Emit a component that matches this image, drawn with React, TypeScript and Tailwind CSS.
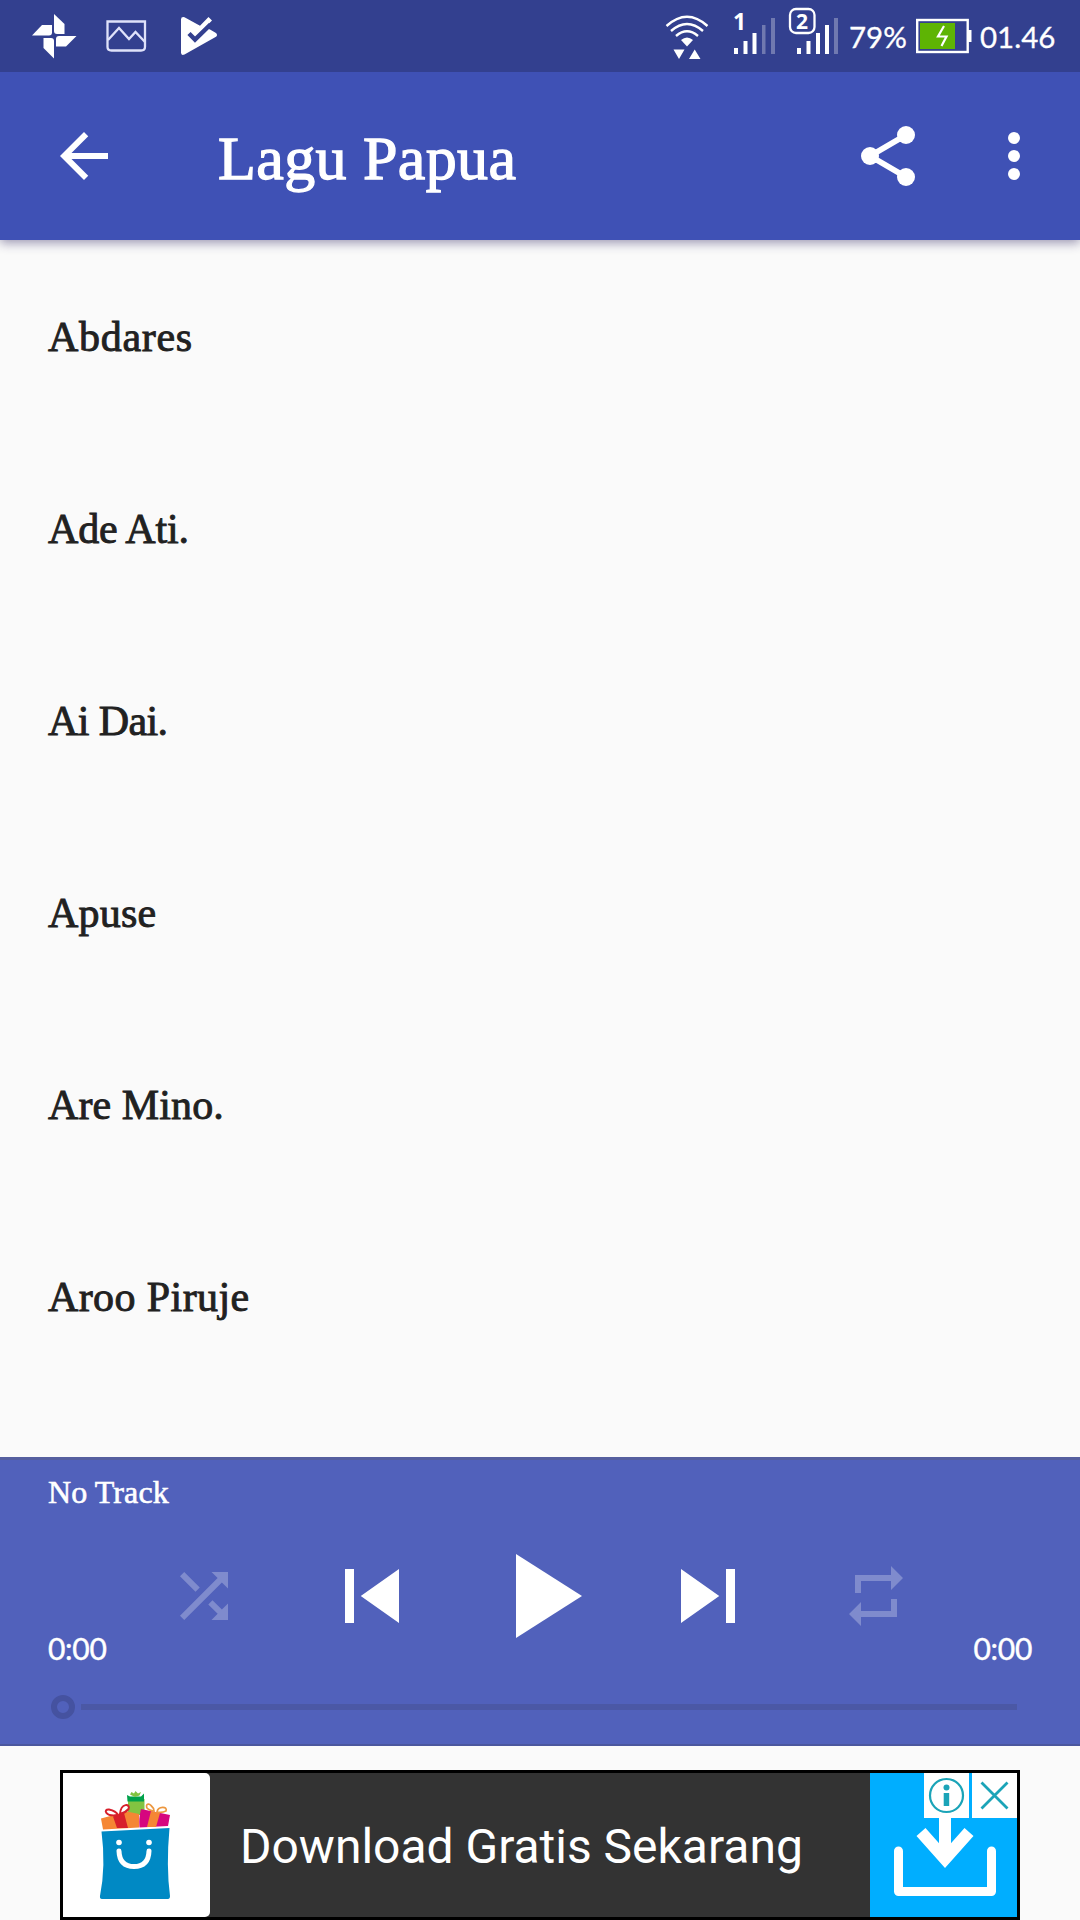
import React from "react";

const songs = [
  { title: "Abdares", spacing: "tracking-[0.7px]" },
  { title: "Ade Ati.", spacing: "tracking-[-0.2px]" },
  { title: "Ai Dai.", spacing: "tracking-[-0.6px]" },
  { title: "Apuse", spacing: "tracking-[0.2px]" },
  { title: "Are Mino.", spacing: "tracking-[0.1px]" },
  { title: "Aroo Piruje", spacing: "tracking-[0.4px]" },
];

function Icon({ d, className }: { d: string; className: string }) {
  return (
    <svg viewBox="0 0 24 24" fill="currentColor" className={"shrink-0 " + className}>
      <path d={d} />
    </svg>
  );
}

function StatusBar() {
  return (
    <div className="relative z-20 flex h-[72px] shrink-0 items-start bg-[#33408f] text-white">
      <svg className="ml-[30px] h-[72px] w-[50px] shrink-0" viewBox="30 0 50 72" fill="#fff">
        <path d="M54 14L64.500 24V34H57Q54 34 54 31Z" />
        <path d="M76.500 36L66 46.500H56V39Q56 36 59 36Z" />
        <path d="M54 58.500L43.500 48V38H51Q54 38 54 41Z" />
        <path d="M32 35.500L42 25H52V32.500Q52 35.500 49 35.500Z" />
      </svg>
      <svg className="ml-[22px] h-[72px] w-[48px] shrink-0" viewBox="102 0 48 72" fill="none" stroke="#dfe2fa" strokeWidth="2.300">
        <path d="M107.500 21.500H145V47Q145 50.500 141 50.500H111.500Q107.500 50.500 107.500 47Z" />
        <path d="M108 40L119 28L129 39L135.500 32L145 42" />
      </svg>
      <svg className="ml-[26px] h-[72px] w-[50px] shrink-0" viewBox="176 0 50 72">
        <path
          d="M181 19.500Q181 16.500 184.500 17.200L200 25.800L208.500 17L212 20.500L205 27.500L210 29.500L216 33Q218 35 216 36.800L184.500 54.500Q181 56 181 52.500Z"
          fill="#fff"
        />
        <path d="M189 33.500L195 39.500L210.500 24.500" fill="none" stroke="#33408f" strokeWidth="4.500" />
      </svg>
      <svg className="ml-[436px] h-[72px] w-[52px] shrink-0" viewBox="662 0 52 72" fill="none" stroke="#fff" strokeWidth="2.400">
        <path d="M666.500 26Q687 7.500 707.500 26M671 31Q687 17 703 31M676 36Q687 26.500 698 36" />
        <path d="M681 40Q687 35 693 40L687 46.500Z" fill="#fff" stroke="none" />
        <path d="M673.500 49.500H684.500L679 59ZM689 59H700.500L694.700 49.500Z" fill="#fff" stroke="none" />
      </svg>
      <div className="relative ml-[18px] h-[72px] w-[46px] shrink-0">
        <svg className="h-[72px] w-[46px]" viewBox="732 0 46 72" fill="#fff">
          <path d="M734 48h4v6h-4zM743.500 41h4v13h-4zM752.500 33h4v21h-4z" />
          <path d="M762 25h3.500v29H762zM771 18h4v36h-4z" opacity=".3" />
        </svg>
        <span className="absolute top-[9px] left-[1px] font-['Noto_Sans'] text-[23px] leading-[24px] font-bold">1</span>
      </div>
      <div className="relative ml-[10px] h-[72px] w-[54px] shrink-0">
        <svg className="h-[72px] w-[54px]" viewBox="788 0 54 72" fill="#fff">
          <path d="M797 48h4v6h-4zM806.500 41h4v13h-4zM816 33h4v21h-4zM825 25h4v29h-4z" />
          <path d="M834 18h4v36h-4z" opacity=".3" />
          <rect x="790" y="9" width="24.500" height="24" rx="6" fill="none" stroke="#fff" strokeWidth="2.300" />
        </svg>
        <span className="absolute top-[9px] left-[8px] font-['Noto_Sans'] text-[21px] leading-[24px] font-bold">2</span>
      </div>
      <span className="ml-[7px] w-[67px] shrink-0 pt-[18px] font-[Lato] text-[29.500px] leading-[38px] whitespace-nowrap [-webkit-text-stroke:0.300px_#fff]">79%</span>
      <svg className="h-[72px] w-[60px] shrink-0" viewBox="916 0 60 72">
        <rect x="917.200" y="20" width="50.500" height="32" fill="none" stroke="#fff" strokeWidth="2.400" />
        <path d="M968 30h3.500v12H968z" fill="#fff" />
        <path d="M920 23h35v26h-35z" fill="#5eb404" />
        <path d="M944 26L938 36.500H946.500L941.500 46" fill="none" stroke="#fff" strokeWidth="2.200" />
      </svg>
      <span className="ml-[4px] pt-[18px] font-[Lato] text-[29.500px] leading-[38px] whitespace-nowrap [-webkit-text-stroke:0.300px_#fff]">01.46</span>
    </div>
  );
}

function AppBar() {
  return (
    <header className="relative z-10 flex h-[168px] shrink-0 items-center bg-[#3f51b5] text-white shadow-[0_3px_10px_rgba(40,30,90,0.45)]">
      <Icon className="ml-[48px] size-[72px]" d="M20 11H7.830l5.590-5.590L12 4l-8 8 8 8 1.410-1.410L7.830 13H20v-2z" />
      <h1 className="ml-[98px] grow pt-[3px] font-['Liberation_Serif'] text-[62px] leading-none tracking-[0.4px] [-webkit-text-stroke:1.3px_#fff]">
        Lagu Papua
      </h1>
      <svg viewBox="0 0 24 24" className="size-[72px] shrink-0" fill="currentColor">
        <circle cx="6" cy="12" r="3" />
        <circle cx="18" cy="5" r="3" />
        <circle cx="18" cy="19" r="3" />
        <path d="M18 5L6 12L18 19" fill="none" stroke="currentColor" strokeWidth="1.900" />
      </svg>
      <Icon
        className="mr-[30px] ml-[54px] size-[72px]"
        d="M12 8a2 2 0 1 0 0-4 2 2 0 0 0 0 4zm0 2a2 2 0 1 0 0 4 2 2 0 0 0 0-4zm0 6a2 2 0 1 0 0 4 2 2 0 0 0 0-4z"
      />
    </header>
  );
}

function Player() {
  return (
    <section className="flex h-[289px] shrink-0 flex-col border-t-[3px] border-b-2 border-t-[#555f9f] border-b-[#4b579e] bg-[#5161bb] text-white">
      <p className="h-[64px] pt-[14px] pl-[48px] font-['Liberation_Serif'] text-[32px] leading-[36px] tracking-[0.1px] [-webkit-text-stroke:0.6px_#fff]">
        No Track
      </p>
      <div className="flex h-[144px] items-center">
        <Icon
          className="ml-[168px] size-[72px] text-[#7f8bcd]"
          d="M10.590 9.170L5.410 4 4 5.410l5.170 5.170 1.420-1.410zM14.500 4l2.040 2.040L4 18.590 5.410 20 17.960 7.460 20 9.500V4h-5.500zm.33 9.410l-1.410 1.410 3.130 3.130L14.500 20H20v-5.500l-2.040 2.040-3.130-3.130z"
        />
        <Icon className="ml-[78px] size-[108px]" d="M6 6h2v12H6zm3.500 6l8.500 6V6z" />
        <Icon className="ml-[42px] size-[144px]" d="M8 5v14l11-7z" />
        <Icon className="ml-[42px] size-[108px]" d="M6 18l8.500-6L6 6v12zM16 6v12h2V6h-2z" />
        <Icon
          className="ml-[78px] size-[72px] text-[#7f8bcd]"
          d="M7 7h10v3l4-4-4-4v3H5v6h2V7zm10 10H7v-3l-4 4 4 4v-3h12v-6h-2v4z"
        />
      </div>
      <div className="-mt-[38px] flex h-[36px] justify-between pr-[48px] pl-[48px] font-[Lato] text-[30px] leading-[36px] tracking-[-0.3px] [-webkit-text-stroke:0.4px_#fff]">
        <span>0:00</span>
        <span>0:00</span>
      </div>
      <div className="mt-[29px] flex h-[24px] items-center gap-[6px] pr-[63px] pl-[51px]">
        <div className="size-[24px] rounded-full border-[6px] border-[#4552a0]" />
        <div className="h-[6px] grow bg-[#4b58a5]" />
      </div>
    </section>
  );
}

function GiftBag() {
  return (
    <svg className="h-[144px] w-[147px]" viewBox="63 1773 147 144">
      <path d="M128 1799h16.500v16h-16.500z" fill="#82c341" />
      <path d="M127 1795L130 1796.500H141L144 1793.500V1801.500H127.500Z" fill="#00a14b" />
      <path d="M130 1794.500L131.500 1792L134 1793.500L135.500 1791L138 1793.500L141 1792L139.500 1795.500L135 1797Z" fill="#82c341" />
      <path d="M101 1818.500L127 1811.500L139 1814V1827.500L103 1829.500Z" fill="#f58634" />
      <path d="M113 1816.500L124 1813L128 1828H117Z" fill="#d71f2b" />
      <path d="M141 1809L170 1815L168 1826L139.500 1827.500Q138.500 1819 141 1809Z" fill="#d6077f" />
      <path d="M151 1811L160 1813L156 1827H147Z" fill="#f58634" />
      <path d="M118 1815C105 1817 103 1809 109 1809.500Q116 1811 118 1815ZM120 1814C121 1802 131 1804 128.500 1809Q125 1813 120 1814Z" fill="none" stroke="#d71f2b" strokeWidth="2" />
      <path d="M154 1811C142 1809 147 1801 151 1805.500Q154 1808 154 1811ZM157 1812C158 1806 168 1806 166 1811Q162 1813 157 1812Z" fill="none" stroke="#ec973f" strokeWidth="1.700" />
      <path d="M101.500 1831.500L169.500 1828Q166 1866 170 1896Q170 1899 168 1899H102Q99.500 1899 100 1896Q106 1866 101.500 1831.500Z" fill="#0089c4" />
      <g fill="#fff">
        <circle cx="119" cy="1842.500" r="2.800" />
        <circle cx="149" cy="1842.500" r="2.800" />
      </g>
      <path d="M119 1851Q119.500 1866.500 134 1866.500T149 1851" fill="none" stroke="#fff" strokeWidth="5" strokeLinecap="round" />
    </svg>
  );
}

function AdBanner() {
  return (
    <div className="mx-[60px] mt-[24px] flex h-[150px] shrink-0 border-[3px] border-black bg-[#333]">
      <div className="w-[147px] shrink-0 rounded-r-[5px] bg-white">
        <GiftBag />
      </div>
      <p className="grow pl-[30px] font-[Roboto] text-[48px] leading-[147px] tracking-[-0.01px] whitespace-nowrap text-white">
        Download Gratis Sekarang
      </p>
      <div className="relative w-[147px] shrink-0 bg-[#00aeff]">
        <svg className="h-[144px] w-[147px]" viewBox="870 1773 147 144" fill="none" stroke="#fff">
          <path d="M898.500 1851V1891.500H991.500V1851" strokeWidth="9" strokeLinecap="round" strokeLinejoin="round" />
          <path d="M945 1810V1855" strokeWidth="12" />
          <path d="M921 1832L945 1859L969 1832" strokeWidth="12" />
        </svg>
        <div className="absolute top-0 right-0 flex gap-[3px]">
          <div className="bg-white">
            <svg className="size-[45px]" viewBox="0 0 45 45" fill="#1ba4b8">
              <circle cx="22.500" cy="22.500" r="16.500" fill="none" stroke="#1ba4b8" strokeWidth="2.200" />
              <circle cx="22.500" cy="14.500" r="3" />
              <path d="M19.700 20h5.500v13h-5.500z" />
            </svg>
          </div>
          <div className="bg-white">
            <svg className="size-[45px]" viewBox="0 0 45 45" stroke="#1ba4b8" strokeWidth="2.800">
              <path d="M9.500 9.500L35.500 35.500M35.500 9.500L9.500 35.500" />
            </svg>
          </div>
        </div>
      </div>
    </div>
  );
}

export default function App() {
  return (
    <div className="flex h-[1920px] w-[1080px] flex-col overflow-hidden bg-[#fafafa]">
      <StatusBar />
      <AppBar />
      <ul className="h-[1217px] shrink-0 pl-[48px] font-['Liberation_Serif'] text-[42px] text-[#212121] [-webkit-text-stroke:0.9px_#212121]">
        {songs.map((s) => (
          <li key={s.title} className={"flex h-[192px] items-center pt-[2px] leading-none " + s.spacing}>
            {s.title}
          </li>
        ))}
      </ul>
      <Player />
      <AdBanner />
    </div>
  );
}
